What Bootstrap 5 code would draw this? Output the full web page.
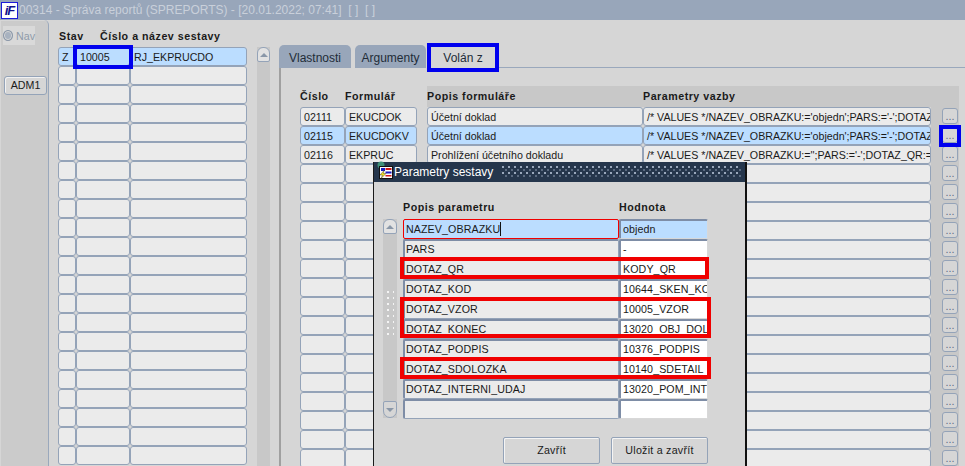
<!DOCTYPE html>
<html lang="cs">
<head>
<meta charset="utf-8">
<title>Parametry sestavy</title>
<link href="https://cdn.jsdelivr.net/npm/bootstrap@5.3.0/dist/css/bootstrap.min.css" rel="stylesheet">
<style>
html,body{margin:0;height:466px;width:965px;overflow:hidden;background:#d6d6d6;font-family:"Liberation Sans",Arial,sans-serif;font-size:10.67px;color:#1a1a1a;line-height:1}
.shell{height:466px;position:relative}
.ttl{height:20px;background:#98a6ba;color:#c9d0da;font-size:12px;gap:1px;padding-left:1px;white-space:pre}
.logo{width:17px;height:17px;background:#fff;border:1px solid #1c1cd8;color:#10108c;font-weight:700;font-style:italic;font-size:13px;letter-spacing:-1px;text-align:center;line-height:15px}
.rail{width:49px;background:#cbcbcb;border-right:1px solid #9aa8bc;border-top-right-radius:5px;box-shadow:inset 1px 1px #d6d6d6;padding:6px 1px 0 3px}
.navitem{height:19px;width:32px;background:#d9d9d9;color:#8f9baa;font-size:10.67px;gap:3px;padding-top:1px}
.dot{width:11px;height:11px;border-radius:50%;border:1px solid #8a97a8;background:#a8b2c0;box-shadow:inset 0 0 0 1px #d6d6d6;margin-top:-2px}
.admb{width:43px;height:19px;margin:31px 0 0 1px;border:1px solid #94a3b8;border-radius:3px;background:#d6d6d6;color:#1a1a1a;font-size:10.67px;box-shadow:inset 1px 1px #f2f2f2}
.lpart{width:189px;margin-left:9px}
.hd{font-weight:700;letter-spacing:.52px;color:#1a1a1a}
.lhead{height:27px;padding-bottom:5px}
.stavh{margin-left:1px;width:41px}
.cl{height:19px;flex:none;border:1px solid #94a3b8;border-radius:3px;background:#ebebeb;padding:1px 3px 0;overflow:hidden;white-space:nowrap;display:flex;align-items:center}
.sel{background:#bbddff}
.rw{display:flex;height:19px}
.w1{width:18px}.w2{width:54px}.w3{width:117px}
.sbar{width:13px;margin-left:10px;margin-top:27px;background:#c8c8c8;flex:none}
.sup{height:15px;width:13px;border:1px solid #94a3b8;border-radius:6px 6px 2px 2px;background:#e2e2e2;display:flex;align-items:center;justify-content:center}
.tri{width:0;height:0;border-left:4px solid transparent;border-right:4px solid transparent;border-bottom:4px solid #8a97a8}
.tri.dn{border-bottom:0;border-top:4px solid #8a97a8}
.tabs{margin-left:9px;flex:1;min-width:0;min-height:0}
.tabrow{height:48px;padding-top:25px}
.tb{height:23px;background:#98a6ba;border-radius:5px 5px 0 0;font-size:12px;padding-top:2px;display:flex;align-items:center;justify-content:center;color:#222c38}
.t1{width:72px}.t2{width:71px;margin-left:4px}.t3{width:70px;margin-left:2px;background:#d6d6d6}
.tline{flex:1;border-bottom:1px solid #9aa8bc;height:23px}
.tpanel{flex:1;min-height:0;border-left:2px solid #a0a0a0;padding:18px 0 0 19px;background:#d6d6d6}
.rhead{height:21px;align-items:center}
.rh1{width:45px}.rh2{width:82px}
.rh3{width:216px;background:#c8c8c8;height:21px;display:flex;align-items:center}
.rh4{width:288px;background:#c8c8c8;height:21px;display:flex;align-items:center}
.rh5{width:28px;background:#c8c8c8;height:21px}
.c1{width:45px}.c2{width:72px}.gp{width:10px;flex:none;background:#d6d6d6}.c3{width:216px}.c4{width:288px}
.g2{width:11px;flex:none;background:#c8c8c8}
.btnbox{width:17px;flex:none;background:#c8c8c8;display:block}
.ell{display:block;width:16px;height:16px;padding:0;margin:1px 0 0;border:1px solid #94a3b8;border-radius:3px;background:#d6d6d6;color:#5b6b85;font-size:10.67px;line-height:14px;text-align:center;overflow:hidden}
.mark1{position:absolute;border:4px solid #0000ee;pointer-events:none}
.mark2{position:absolute;border:4px solid #f00000;pointer-events:none}
.dlg{position:absolute;left:373px;top:162px;width:374px;height:304px;background:#d6d6d6;border-left:1px solid #1a1a1a;border-right:2px solid #111}
.dtitle{height:20px;background:#25364c;color:#fff;font-size:12px;padding-left:2px;white-space:nowrap}
.dicon{margin-top:-4px;margin-right:1px}
.dots{flex:1;height:12px;margin:0 4px 0 9px;background-color:#25364c;background-image:radial-gradient(circle at 1px 1px,#9aa8bc 0,#9aa8bc .8px,transparent 1px),radial-gradient(circle at 1px 1px,#5a6a80 0,#5a6a80 .8px,transparent 1px);background-size:6px 6px;background-position:0 0,3px 3px}
.dbody{padding:0 0 0 9px}
.dsb{width:14px;flex:none;margin-top:37px;height:199px;background:#c8c8c8}
.dsb .sup{width:14px}
.sdn{height:17px;width:14px;border:1px solid #94a3b8;border-radius:2px 2px 7px 7px;background:#d6d6d6;display:flex;align-items:center;justify-content:center;margin-top:auto}
.grip{width:7px;height:45px;margin:57px auto 0;background-image:radial-gradient(circle at 1px 1px,#f4f4f4 0,#f4f4f4 1px,transparent 1.2px);background-size:6px 6px}
.dtbl{margin-left:6px}
.dh{height:37px;padding-bottom:6px;align-items:flex-end}
.dh1{width:216px}
.drow{display:flex;height:20px}
.na{width:216px;height:20px;flex:none;border:1px solid #94a3b8;border-left:2px solid #7e8da6;border-top:2px solid #7e8da6;border-radius:2px;background:#ebebeb;padding:0 1px;display:flex;align-items:center;white-space:nowrap;overflow:hidden;letter-spacing:.1px}
.va{width:89px;height:20px;flex:none;border:1px solid #d8d8d8;border-left:2px solid #7e8da6;border-top:2px solid #7e8da6;border-radius:2px;background:#fff;padding:0 2px;display:flex;align-items:center;white-space:nowrap;overflow:hidden;letter-spacing:.1px}
.na.foc{border:1px solid #f00000;background:#bbddff;padding-left:2px}
.va.sel{background:#bbddff}
.caret{display:inline-block;width:1px;height:14px;background:#111}
.dbtns{margin:18px 0 0 100px;gap:11px}
.dbtn{width:97px;height:27px;border:1px solid #94a3b8;border-radius:2px;background:#d6d6d6;box-shadow:inset 1px 1px #f4f4f4;color:#1a1a1a;font-size:10.67px;padding:0;letter-spacing:.25px}
</style>
</head>
<body>
<div class="shell d-flex flex-column">
  <div class="ttl d-flex align-items-center flex-shrink-0"><span class="logo">iF</span><span>00314 - Správa reportů (SPREPORTS) - [20.01.2022; 07:41]  [ ]  [ ]</span></div>
  <div class="d-flex flex-grow-1 overflow-hidden">
    <div class="rail flex-shrink-0">
      <div class="navitem d-flex align-items-center"><span class="dot"></span><span>Nav</span></div>
      <button class="admb d-flex align-items-center justify-content-center" type="button">ADM1</button>
    </div>
    <div class="lpart flex-shrink-0">
      <div class="lhead hd d-flex align-items-end"><span class="stavh flex-shrink-0">Stav</span><span>Číslo a název sestavy</span></div>
      <div id="ltable"></div>
    </div>
    <div class="sbar"><div class="sup"><span class="tri"></span></div></div>
    <div class="tabs d-flex flex-column">
      <div class="tabrow d-flex flex-shrink-0">
        <div class="tb t1">Vlastnosti</div><div class="tb t2">Argumenty</div><div class="tb t3">Volán z</div><div class="tline"></div>
      </div>
      <div class="tpanel">
        <div class="rhead hd d-flex"><span class="rh1">Číslo</span><span class="rh2">Formulář</span><span class="rh3">Popis formuláře</span><span class="rh4">Parametry vazby</span><span class="rh5"></span></div>
        <div id="rtable"></div>
      </div>
    </div>
  </div>

  <div class="mark1" style="left:73px;top:45px;width:60px;height:24px"></div>
  <div class="mark1" style="left:427px;top:43px;width:72px;height:29px"></div>
  <div class="mark1" style="left:939px;top:125px;width:22px;height:22px"></div>

  <div class="dlg">
    <div class="dtitle d-flex align-items-center">
      <svg width="17" height="18" viewBox="0 0 17 18" class="dicon flex-shrink-0"><circle cx="5" cy="4" r="3.5" fill="#3f8f78"/><rect x="3.5" y="5.5" width="13" height="12" fill="#fff" stroke="#111"/><rect x="9.5" y="7" width="6" height="2" fill="#d01818"/><rect x="9.5" y="10.5" width="6" height="2" fill="#1818c0"/><rect x="9.5" y="14" width="6" height="1.5" fill="#d01818"/><rect x="5" y="7" width="4" height="3" fill="#1818c0"/><path d="M8 9.5 4 14h2.5L5 17.5l5-5H7.5Z" fill="#f4e020" stroke="#222" stroke-width=".4"/></svg>
      <span>Parametry sestavy</span><span class="dots"></span>
    </div>
    <div class="dbody d-flex">
      <div class="dsb d-flex flex-column"><div class="sup"><span class="tri"></span></div><div class="grip"></div><div class="sdn"><span class="tri dn"></span></div></div>
      <div class="dtbl">
        <div class="dh hd d-flex"><span class="dh1">Popis parametru</span><span>Hodnota</span></div>
        <div id="dtable"></div>
        <div class="dbtns d-flex"><button class="dbtn" type="button">Zavřít</button><button class="dbtn" type="button">Uložit a zavřít</button></div>
      </div>
    </div>
    <div class="mark2" style="left:26px;top:95px;width:309px;height:22px"></div>
    <div class="mark2" style="left:26px;top:135px;width:311px;height:41px"></div>
    <div class="mark2" style="left:26px;top:195px;width:311px;height:22px"></div>
  </div>
</div>
<script>
var L=document.getElementById('ltable'),h='';
for(var i=0;i<22;i++){h+='<div class="rw"><div class="cl w1'+(i?'':' sel')+'">'+(i?'':'Z')+'</div><div class="cl w2'+(i?'':' sel')+'">'+(i?'':'10005')+'</div><div class="cl w3'+(i?'':' sel')+'">'+(i?'':'RJ_EKPRUCDO')+'</div></div>';}
L.innerHTML=h;
var R=[['02111','EKUCDOK','Účetní doklad',"/* VALUES */NAZEV_OBRAZKU:='objedn';PARS:='-';DOTAZ"],['02115','EKUCDOKV','Účetní doklad',"/* VALUES */NAZEV_OBRAZKU:='objedn';PARS:='-';DOTAZ"],['02116','EKPRUC','Prohlížení účetního dokladu',"/* VALUES */NAZEV_OBRAZKU:='';PARS:='-';DOTAZ_QR:="]];
h='';
for(i=0;i<19;i++){var r=R[i]||['','','',''],s=i==1?' sel':'';h+='<div class="rw"><div class="cl c1'+s+'">'+r[0]+'</div><div class="cl c2'+s+'">'+r[1]+'</div><div class="gp"></div><div class="cl c3'+s+'">'+r[2]+'</div><div class="cl c4'+s+'">'+r[3]+'</div><div class="g2"></div><div class="btnbox"><button class="ell" type="button">...</button></div></div>';}
document.getElementById('rtable').innerHTML=h;
var D=[['NAZEV_OBRAZKU','objedn'],['PARS','-'],['DOTAZ_QR','KODY_QR'],['DOTAZ_KOD','10644_SKEN_KO'],['DOTAZ_VZOR','10005_VZOR'],['DOTAZ_KONEC','13020_OBJ_DOL'],['DOTAZ_PODPIS','10376_PODPIS'],['DOTAZ_SDOLOZKA','10140_SDETAIL'],['DOTAZ_INTERNI_UDAJ','13020_POM_INTE'],['','']];
h='';
for(i=0;i<10;i++){h+='<div class="drow"><div class="na'+(i?'':' foc')+'">'+D[i][0]+(i?'':'<span class="caret"></span>')+'</div><div class="va'+(i?'':' sel')+'">'+D[i][1]+'</div></div>';}
document.getElementById('dtable').innerHTML=h;
</script>
</body>
</html>
